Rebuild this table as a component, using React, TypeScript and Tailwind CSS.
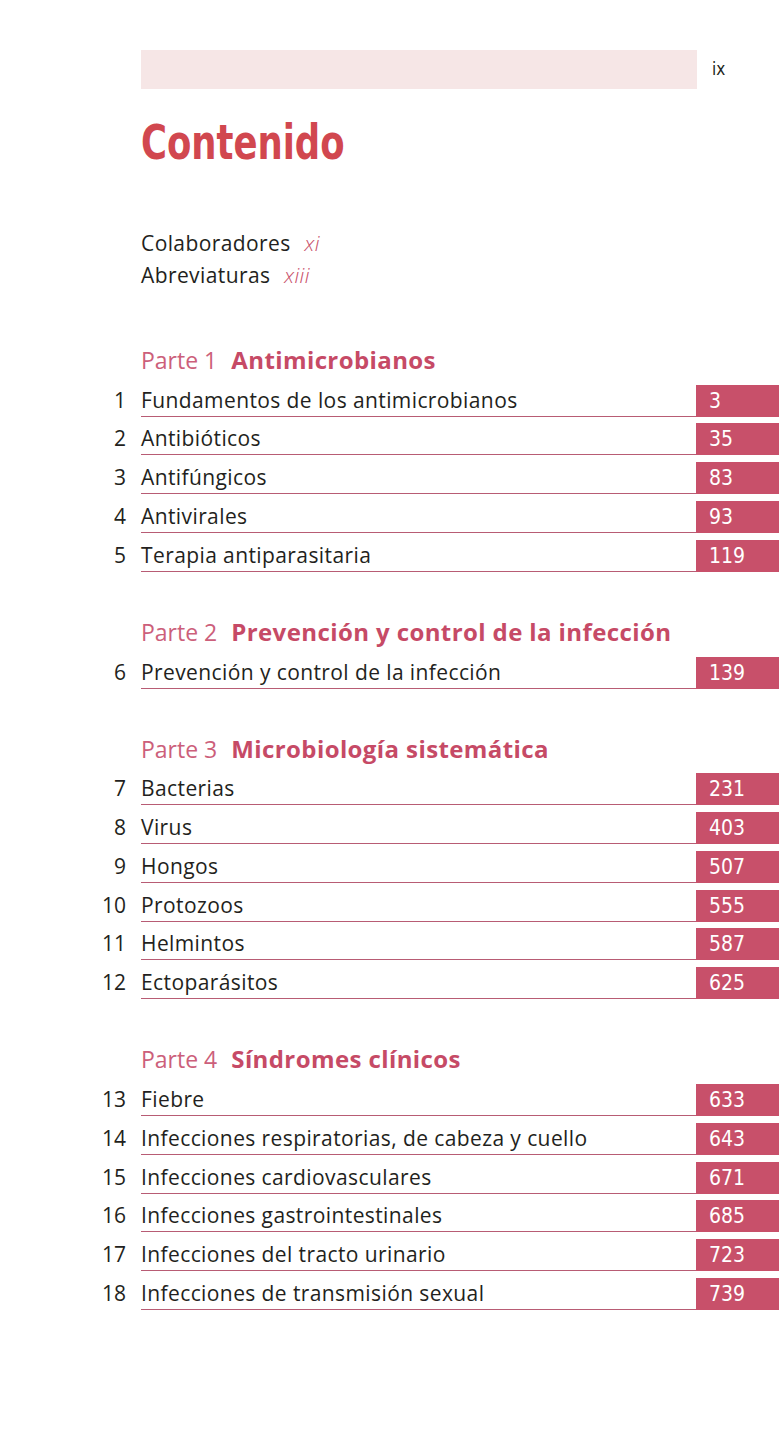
import React from "react";

type Row = { n: number; t: string; p: string };
type Part = { label: string; title: string; rows: Row[] };

const parts: Part[] = [
  {
    label: "Parte 1",
    title: "Antimicrobianos",
    rows: [
      { n: 1, t: "Fundamentos de los antimicrobianos", p: "3" },
      { n: 2, t: "Antibióticos", p: "35" },
      { n: 3, t: "Antifúngicos", p: "83" },
      { n: 4, t: "Antivirales", p: "93" },
      { n: 5, t: "Terapia antiparasitaria", p: "119" },
    ],
  },
  {
    label: "Parte 2",
    title: "Prevención y control de la infección",
    rows: [{ n: 6, t: "Prevención y control de la infección", p: "139" }],
  },
  {
    label: "Parte 3",
    title: "Microbiología sistemática",
    rows: [
      { n: 7, t: "Bacterias", p: "231" },
      { n: 8, t: "Virus", p: "403" },
      { n: 9, t: "Hongos", p: "507" },
      { n: 10, t: "Protozoos", p: "555" },
      { n: 11, t: "Helmintos", p: "587" },
      { n: 12, t: "Ectoparásitos", p: "625" },
    ],
  },
  {
    label: "Parte 4",
    title: "Síndromes clínicos",
    rows: [
      { n: 13, t: "Fiebre", p: "633" },
      { n: 14, t: "Infecciones respiratorias, de cabeza y cuello", p: "643" },
      { n: 15, t: "Infecciones cardiovasculares", p: "671" },
      { n: 16, t: "Infecciones gastrointestinales", p: "685" },
      { n: 17, t: "Infecciones del tracto urinario", p: "723" },
      { n: 18, t: "Infecciones de transmisión sexual", p: "739" },
    ],
  },
];

const body = "font-['Open_Sans','Noto_Sans',sans-serif] [font-variant-ligatures:none]";
const narrow = "font-['DejaVu_Sans_Condensed','Liberation_Sans',sans-serif]";

export default function App() {
  return (
    <div className={`w-[779px] h-[1434px] bg-white overflow-hidden text-[#231f20] ${body}`}>
      {/* header bar */}
      <div className="mt-[50px] flex items-center h-[39px]">
        <div className="ml-[141px] w-[556px] h-full bg-[#f6e6e6]" />
        <div className={`ml-[15px] text-[17px] leading-none ${narrow}`}>ix</div>
      </div>

      {/* title */}
      <h1
        className={`mt-[28px] ml-[141px] text-[48px] leading-[50px] font-bold text-[#d1474f] origin-left scale-x-[0.82] whitespace-nowrap ${narrow}`}
      >
        Contenido
      </h1>

      {/* front matter */}
      <div className="mt-[60px] ml-[141px] text-[21px] leading-[32px] tracking-[0.4px]">
        <div>
          Colaboradores <span className="ml-[8px] italic font-light text-[#c8506a]">xi</span>
        </div>
        <div>
          Abreviaturas <span className="ml-[8px] italic font-light text-[#c8506a]">xiii</span>
        </div>
      </div>

      {/* parts */}
      <div className="mt-[53px] flex flex-col">
        {parts.map((part, pi) => (
          <div key={pi} className={pi > 0 ? "mt-[44px]" : ""}>
            <div className="ml-[141px] text-[23px] leading-[32px] whitespace-nowrap">
              <span className="text-[#cc5f7b]">{part.label}</span>
              <span className="ml-[14px] font-bold text-[#c64a66] text-[24px] tracking-[0.4px]">
                {part.title}
              </span>
            </div>
            <div className="mt-[8.7px] flex flex-col gap-[6.8px]">
              {part.rows.map((r) => (
                <div key={r.n} className="flex h-[32px]">
                  <div className="w-[141px] pr-[15px] text-right text-[21px] leading-[30px]">
                    {r.n}
                  </div>
                  <div className="flex-1 border-b-[1.5px] border-[#b85c74] text-[21px] leading-[30px] tracking-[0.4px] whitespace-nowrap">
                    {r.t}
                  </div>
                  <div
                    className={`w-[83px] bg-[#c8506a] text-white pl-[13px] text-[21px] leading-[32px] ${narrow}`}
                  >
                    {r.p}
                  </div>
                </div>
              ))}
            </div>
          </div>
        ))}
      </div>
    </div>
  );
}
